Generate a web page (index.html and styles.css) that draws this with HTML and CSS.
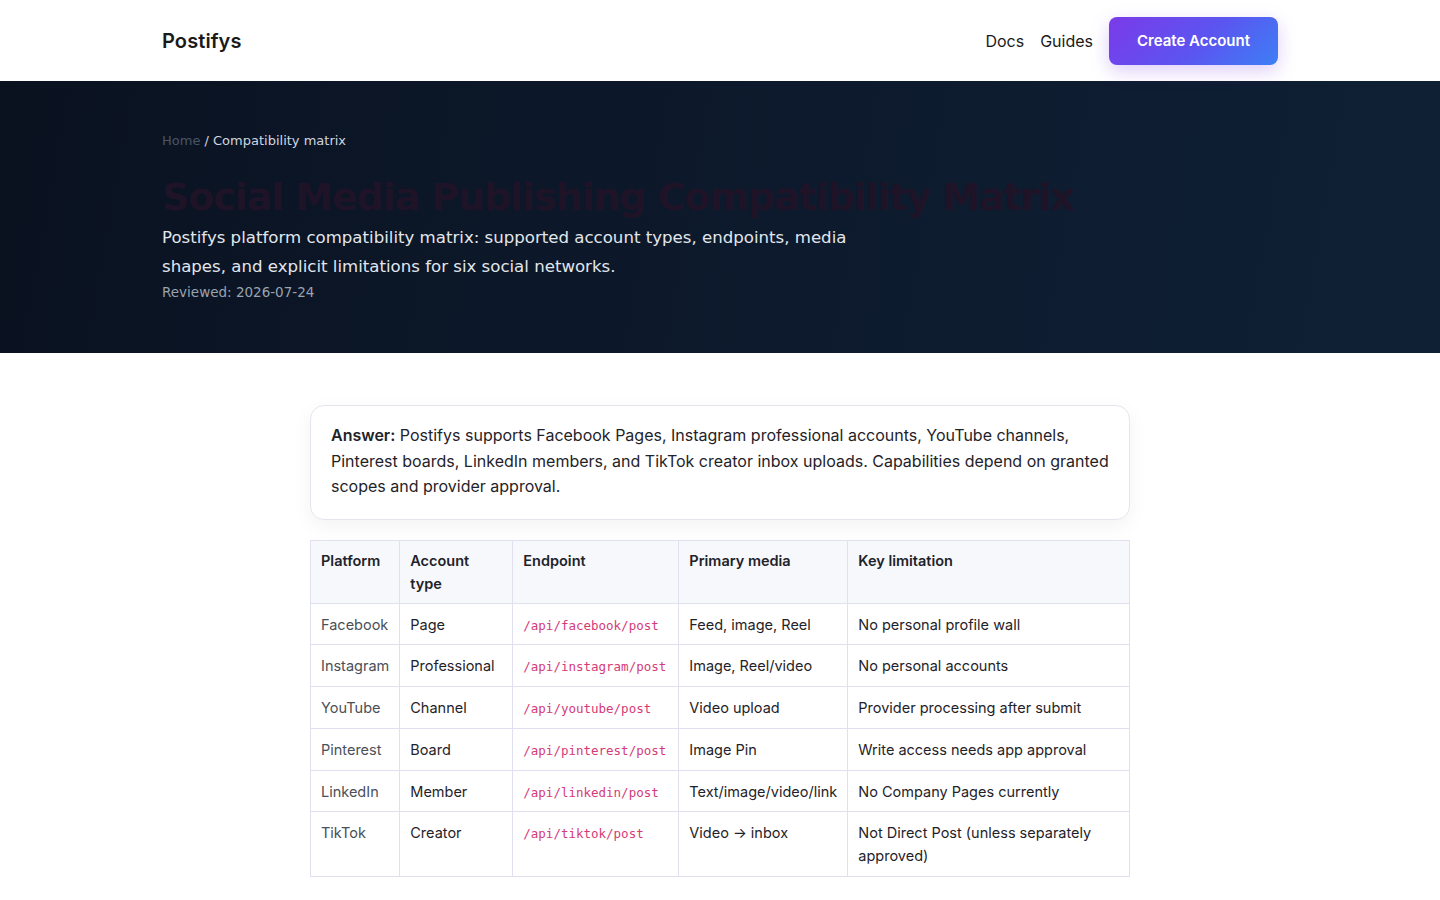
FILE: index.html
```html
<!DOCTYPE html>
<html lang="en">
<head>
    <meta charset="UTF-8">
    <meta name="viewport" content="width=device-width, initial-scale=1.0">
    <title>Social Media Publishing Compatibility Matrix - Postifys</title>
    <link rel="stylesheet" href="styles.css">
</head>
<body>
    <header class="topbar">
        <div class="wrap topbar-inner">
            <a class="brand" href="#">Postifys</a>
            <nav class="nav">
                <a href="#">Docs</a>
                <a href="#">Guides</a>
                <a class="btn-primary" href="#">Create Account</a>
            </nav>
        </div>
    </header>

    <section class="hero">
        <div class="wrap">
            <div class="crumbs"><a href="#">Home</a> / Compatibility matrix</div>
            <h1>Social Media Publishing Compatibility Matrix</h1>
            <p class="lead">Postifys platform compatibility matrix: supported account types, endpoints, media shapes, and explicit limitations for six social networks.</p>
            <p class="reviewed">Reviewed: 2026-07-24</p>
        </div>
    </section>

    <main class="content">
        <div class="answer">
            <p><strong>Answer:</strong> Postifys supports Facebook Pages, Instagram professional accounts, YouTube channels, Pinterest boards, LinkedIn members, and TikTok creator inbox uploads. Capabilities depend on granted scopes and provider approval.</p>
        </div>

        <table class="matrix">
            <thead>
                <tr>
                    <th class="c-platform">Platform</th>
                    <th class="c-account">Account type</th>
                    <th class="c-endpoint">Endpoint</th>
                    <th class="c-media">Primary media</th>
                    <th>Key limitation</th>
                </tr>
            </thead>
            <tbody>
                <tr>
                    <td class="platform">Facebook</td>
                    <td>Page</td>
                    <td><code>/api/facebook/post</code></td>
                    <td>Feed, image, Reel</td>
                    <td>No personal profile wall</td>
                </tr>
                <tr>
                    <td class="platform">Instagram</td>
                    <td>Professional</td>
                    <td><code>/api/instagram/post</code></td>
                    <td>Image, Reel/video</td>
                    <td>No personal accounts</td>
                </tr>
                <tr>
                    <td class="platform">YouTube</td>
                    <td>Channel</td>
                    <td><code>/api/youtube/post</code></td>
                    <td>Video upload</td>
                    <td>Provider processing after submit</td>
                </tr>
                <tr>
                    <td class="platform">Pinterest</td>
                    <td>Board</td>
                    <td><code>/api/pinterest/post</code></td>
                    <td>Image Pin</td>
                    <td>Write access needs app approval</td>
                </tr>
                <tr>
                    <td class="platform">LinkedIn</td>
                    <td>Member</td>
                    <td><code>/api/linkedin/post</code></td>
                    <td>Text/image/video/link</td>
                    <td>No Company Pages currently</td>
                </tr>
                <tr>
                    <td class="platform">TikTok</td>
                    <td>Creator</td>
                    <td><code>/api/tiktok/post</code></td>
                    <td>Video &rarr; inbox</td>
                    <td>Not Direct Post (unless separately approved)</td>
                </tr>
            </tbody>
        </table>
    </main>
</body>
</html>
```

FILE: styles.css
```css
:root {
    --text: #1f2329;
    --muted: #4b5058;
    --line: #e0e0f0;
    --head-bg: #f6f8fc;
    --code: #d63a77;
    --hero-a: #0a1220;
    --hero-b: #0f2035;
}

* {
    box-sizing: border-box;
}

body {
    margin: 0;
    font-family: Inter, "Noto Sans", sans-serif;
    color: var(--text);
    background: #ffffff;
}

a {
    color: inherit;
    text-decoration: none;
}

.wrap {
    max-width: 1116px;
    margin: 0 auto;
}

/* top bar */
.topbar {
    background: #ffffff;
    height: 81px;
}

.topbar-inner {
    height: 100%;
    display: flex;
    align-items: center;
    justify-content: space-between;
}

.brand {
    font-size: 20px;
    font-weight: 600;
    color: #1a1a1a;
    letter-spacing: 0.1px;
}

.nav {
    display: flex;
    align-items: center;
    gap: 16px;
    font-size: 16px;
    color: #1a1a1a;
}

.btn-primary {
    display: inline-flex;
    align-items: center;
    justify-content: center;
    width: 169px;
    height: 48px;
    border-radius: 8px;
    background: linear-gradient(135deg, #7b3ae9 0%, #5b55f0 55%, #3d7ff5 100%);
    color: #ffffff;
    font-size: 15px;
    font-weight: 600;
    box-shadow: 0 6px 18px rgba(124, 58, 237, 0.25);
}

/* hero */
.hero {
    background: linear-gradient(100deg, var(--hero-a) 0%, #0d1a2d 55%, var(--hero-b) 100%);
    padding: 52px 0 50px;
    height: 272px;
    font-family: "DejaVu Sans", sans-serif;
}

.crumbs {
    font-size: 13px;
    color: #cfd6e0;
}

.crumbs a {
    color: #4a5566;
}

.hero h1 {
    margin: 24px 0 0;
    font-size: 38px;
    line-height: 50px;
    font-weight: 600;
    color: #1f1328;
    letter-spacing: -1.1px;
}

.lead {
    margin: 1px 0 0;
    max-width: 700px;
    font-size: 16.6px;
    line-height: 29px;
    color: #e2e6ec;
}

.reviewed {
    margin: 0;
    font-size: 13.5px;
    line-height: 22px;
    color: #9aa3af;
}

/* content */
.content {
    max-width: 820px;
    margin: 52px auto 40px;
}

.answer {
    border: 1px solid #e4e6ee;
    border-radius: 14px;
    padding: 17px 20px 19px;
    font-size: 16px;
    line-height: 25.5px;
    color: #1f2329;
    box-shadow: 0 6px 20px rgba(15, 23, 42, 0.05);
}

.answer p {
    margin: 0;
}

.answer strong {
    font-weight: 600;
}

.matrix {
    width: 100%;
    margin-top: 20px;
    border-collapse: collapse;
    font-size: 14.5px;
    line-height: 23px;
}

.matrix th,
.matrix td {
    border: 1px solid var(--line);
    padding: 9px 10px 9px;
    text-align: left;
    vertical-align: top;
}

.matrix td {
    padding-bottom: 8.8px;
}

.matrix th {
    background: var(--head-bg);
    font-weight: 600;
    padding-bottom: 8px;
    padding-top: 8px;
}

.c-platform { width: 89px; }
.c-account { width: 113px; }
.c-endpoint { width: 166px; }
.c-media { width: 169px; }

.matrix td.platform {
    color: var(--muted);
}

.matrix code {
    font-family: "DejaVu Sans Mono", monospace;
    font-size: 12.5px;
    line-height: 1;
    color: var(--code);
}
```
